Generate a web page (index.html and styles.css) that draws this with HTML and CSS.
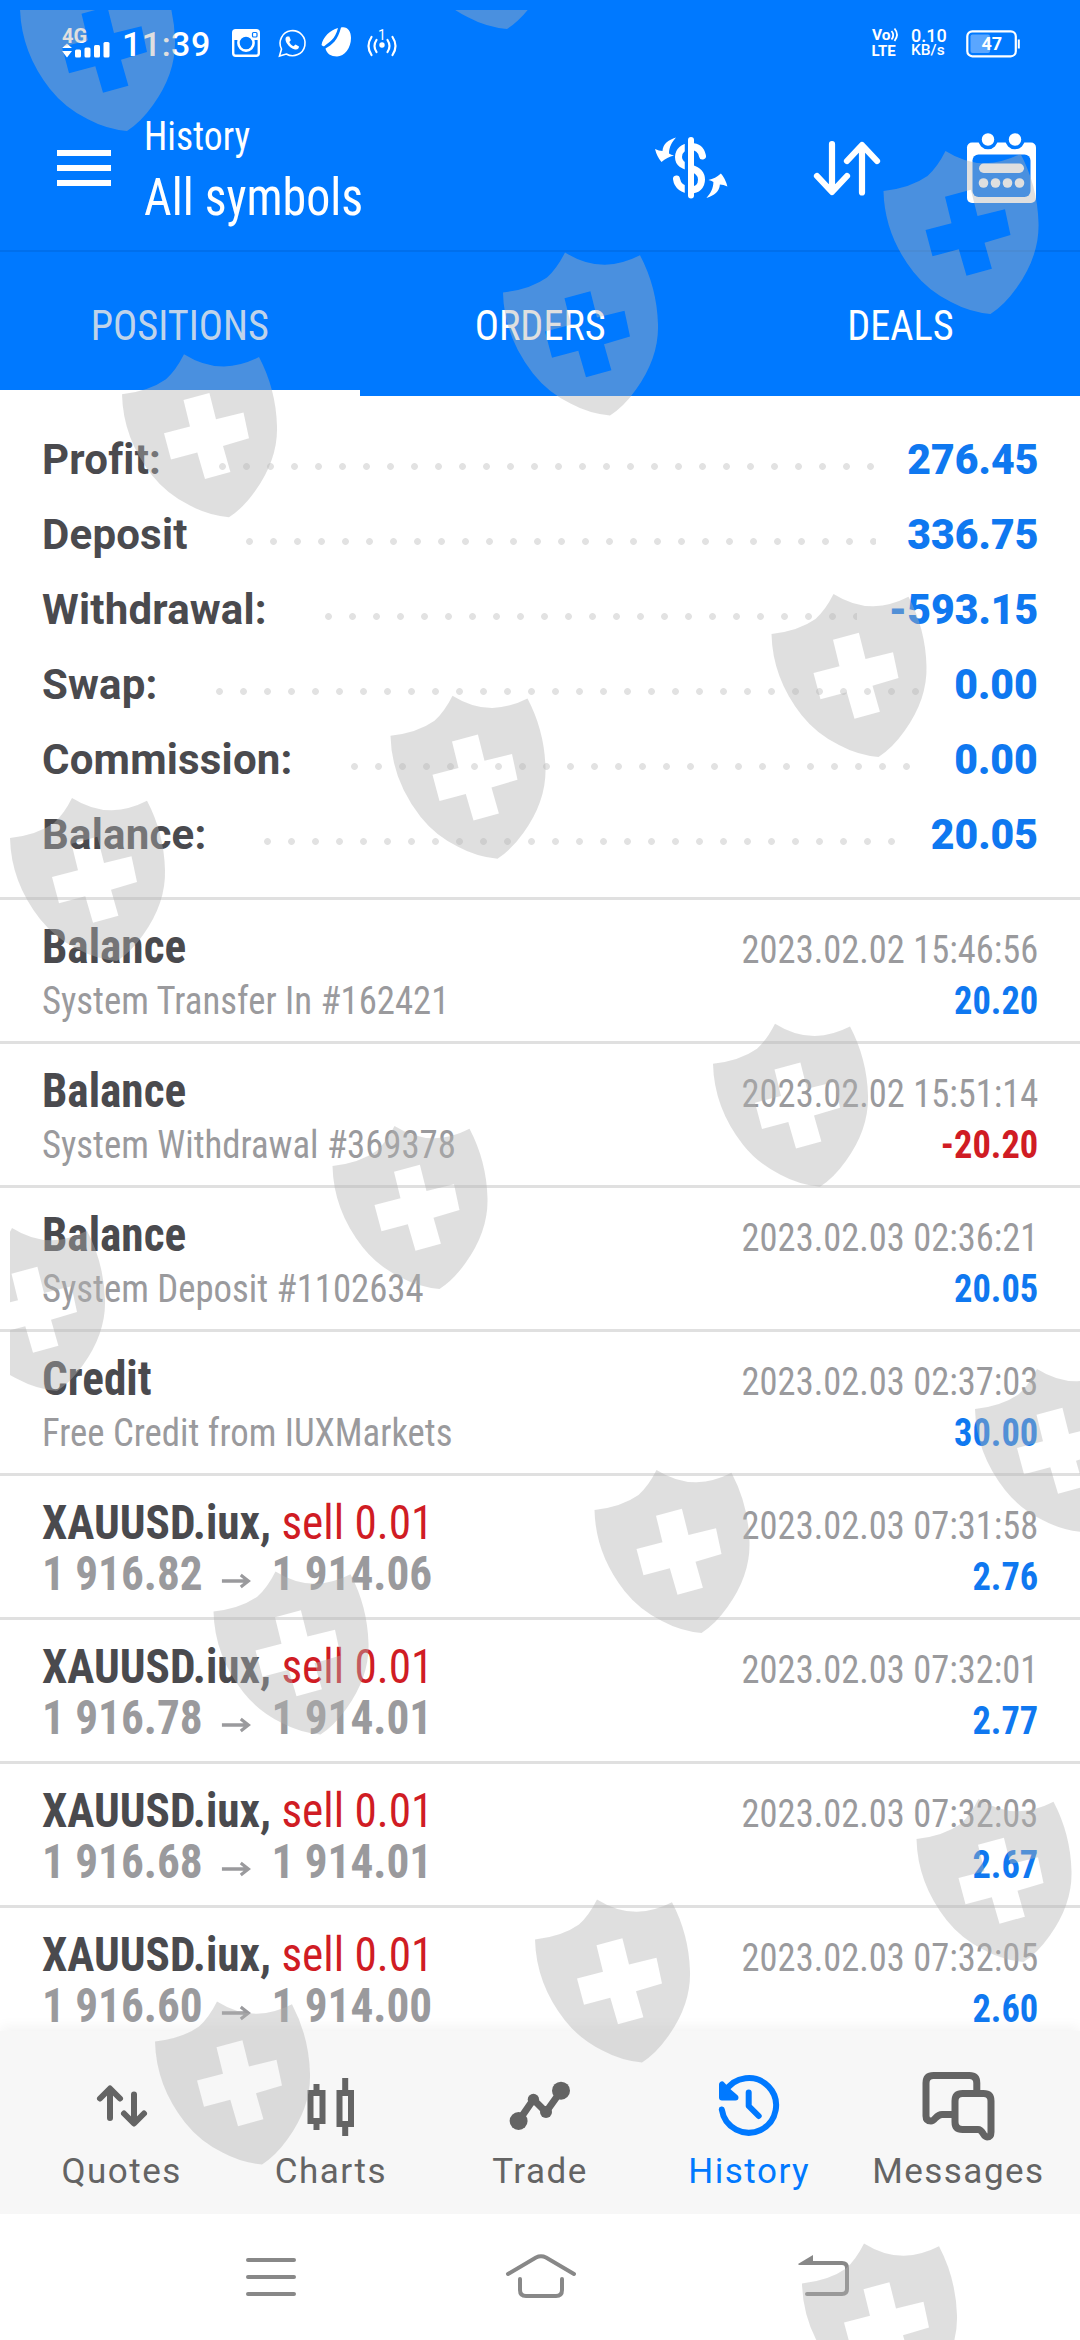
FILE: index.html
```
<!DOCTYPE html>
<html lang="en">
<head>
    <meta charset="UTF-8">
    <meta name="viewport" content="width=device-width, initial-scale=1.0">
    <title>History</title>
    <link rel="stylesheet" href="styles.css">
</head>
<body>
    <div class="screen">
        <header class="header">
            <div class="status-bar">
                <svg class="signal" width="48" height="30" viewBox="0 0 48 30" fill="#fff">
                    <text x="0" y="14.500" font-size="20" font-weight="700">4G</text>
                    <path d="M5 15.500l5 4.500H0zM0 23h10l-5 6.500z"/>
                    <rect x="13" y="21.500" width="6" height="8" rx="1.500"/>
                    <rect x="22.500" y="19.500" width="6" height="10" rx="1.500"/>
                    <rect x="32" y="17" width="6" height="12.500" rx="1.500"/>
                    <rect x="41.500" y="14" width="6" height="15.500" rx="1.500"/>
                </svg>
                <span class="clock">11:39</span>
                <svg class="insta" width="28" height="28" viewBox="0 0 28 28" fill="none" stroke="#fff">
                    <rect x="1.200" y="1.200" width="25.600" height="25.600" rx="2.500" stroke-width="2.400"/>
                    <path d="M1 2h26v9h-7a7.500 7.500 0 0 0-12 0H1z" fill="#fff" stroke="none"/>
                    <circle cx="14" cy="14" r="7.600" fill="#0079ff" stroke-width="2.600"/>
                    <rect x="20.500" y="3.500" width="4.500" height="4.500" rx="1" fill="#fff" stroke="#0079ff" stroke-width="1.200"/>
                </svg>
                <svg class="whatsapp" width="28" height="28" viewBox="0 0 28 28" fill="none" stroke="#fff">
                    <path d="M1.500 27l2-7A12.500 12.500 0 1 1 8.300 25z" stroke-width="1.600"/>
                    <path d="M9 7.500c-2 1-2 4 0 7s5 5.500 8 6 4-1.500 4-3l-3.500-2-2 1.800c-2-.8-3.500-2.500-4.200-4.300l1.500-1.800L11.300 7.500z" fill="#fff" stroke="none"/>
                </svg>
                <svg class="bean" width="31" height="30" viewBox="0 0 31 30" fill="#fff">
                    <path d="M17 1C9 3 2 10 0.500 18c1 1 2 1.500 2.700 1.300C8 15 14 13 17 1z"/>
                    <path d="M20 .5c6-1.500 10 3 10 10.500 0 10-6.500 18.500-14 18.500-6 0-10.500-3-11.500-8C11 18 17 13 20 .5z"/>
                </svg>
                <svg class="hotspot" width="30" height="28" viewBox="0 0 30 28" fill="none" stroke="#fff" stroke-width="2.200" stroke-linecap="round">
                    <path d="M4.500 8Q-1.500 17 4.500 26M9.500 11Q5.500 17 9.500 23M25.500 8Q31.500 17 25.500 26M20.500 11Q24.500 17 20.500 23"/>
                    <circle cx="15" cy="16" r="1.600" fill="#fff"/>
                    <text x="11" y="10.500" font-size="14" fill="#fff" stroke="none">1</text>
                </svg>
                <div class="status-right">
                    <svg width="27" height="28" viewBox="0 0 27 28" fill="#fff">
                        <text x="0" y="12" font-size="15.500" font-weight="700">Vo</text>
                        <path d="M19.500 3q3.500 4 0 8.500M22.500 .5q5 6 0 12.500" fill="none" stroke="#fff" stroke-width="1.800"/>
                        <text x="-.5" y="27.500" font-size="15" font-weight="700">LTE</text>
                    </svg>
                    <div class="speed">
                        <span class="speed-value">0.10</span>
                        <span class="speed-unit">KB/s</span>
                    </div>
                    <svg class="battery" width="54" height="28" viewBox="0 0 54 28">
                        <rect x="1.300" y="1.300" width="48.500" height="25" rx="5" fill="none" stroke="#fff" stroke-width="2.200"/>
                        <rect x="4.500" y="4.500" width="19.500" height="18.600" rx="2" fill="#5aa6ff"/>
                        <rect x="51.800" y="9.500" width="2" height="9" fill="#fff"/>
                        <text x="15.500" y="20.400" font-size="18" font-weight="700" fill="#fff">47</text>
                    </svg>
                </div>
            </div>

            <div class="app-bar">
                <svg width="54" height="36" viewBox="0 0 54 36" fill="#fff">
                    <path d="M0 0h54v6H0zM0 15h54v6H0zM0 30h54v6H0z"/>
                </svg>
                <div class="titles">
                    <div class="title-small">History</div>
                    <div class="title-big">All symbols</div>
                </div>
                <div class="actions">
                    <svg width="72" height="62" viewBox="0 0 72 62">
                        <path d="M47.500 19C46 12 42 9.500 36 9.500c-8 0-12.500 4.500-12.500 10.500C23.500 28 31 29 36 31c6 2 10.500 5 10.500 11.500S42 53 36 53c-8 0-13.500-4-14.500-11" fill="none" stroke="#fff" stroke-width="7" stroke-linecap="round"/>
                        <path d="M31.500 0v62" stroke="#0079ff" stroke-width="3.500"/>
                        <path d="M36 3v55.500" stroke="#fff" stroke-width="6" stroke-linecap="round"/>
                        <g fill="#fff">
                            <path id="swap" d="M21 .5C13 3 8 7 7.500 14Q4 14 0 12q2 8 6.500 13Q12 20 19 18.500q-3-.5-5-2C14 10 17 5 21 .5z"/>
                            <use href="#swap" transform="rotate(180 36.200 30.700)"/>
                        </g>
                    </svg>
                    <svg width="66" height="55" viewBox="0 0 66 55" fill="none" stroke="#fff" stroke-width="6.200" stroke-linecap="round" stroke-linejoin="round">
                        <path d="M18 3v47M3 35l15 16 15-16M48 51.500V5M33 20L48 4l15 16"/>
                    </svg>
                    <svg width="69" height="70" viewBox="0 0 69 70" fill="#fff">
                        <rect y="9.500" width="69" height="60.500" rx="5"/>
                        <rect x="5.500" y="21.500" width="58" height="42.500" rx="6" fill="#0079ff"/>
                        <g stroke="#0079ff" stroke-width="3.500">
                            <circle cx="21" cy="6.500" r="8"/>
                            <circle cx="48" cy="6.500" r="8"/>
                        </g>
                        <rect x="12" y="30.500" width="45" height="9.500" rx="4.700"/>
                        <circle cx="16.500" cy="50" r="4.800"/>
                        <circle cx="28.500" cy="50" r="4.800"/>
                        <circle cx="40.500" cy="50" r="4.800"/>
                        <circle cx="52.500" cy="50" r="4.800"/>
                    </svg>
                </div>
            </div>

            <nav class="tabs">
                <div class="tab active"><span>POSITIONS</span></div>
                <div class="tab"><span>ORDERS</span></div>
                <div class="tab"><span>DEALS</span></div>
            </nav>
        </header>

        <section class="summary">
            <div class="sum-row"><span>Profit:</span><i class="dots"></i><b>276.45</b></div>
            <div class="sum-row"><span>Deposit</span><i class="dots"></i><b>336.75</b></div>
            <div class="sum-row"><span>Withdrawal:</span><i class="dots"></i><b>-593.15</b></div>
            <div class="sum-row"><span>Swap:</span><i class="dots"></i><b>0.00</b></div>
            <div class="sum-row"><span>Commission:</span><i class="dots"></i><b>0.00</b></div>
            <div class="sum-row"><span>Balance:</span><i class="dots"></i><b>20.05</b></div>
        </section>

        <main class="list">
            <div class="item">
                <div class="left">
                    <div class="name">Balance</div>
                    <div class="note">System Transfer In #162421</div>
                </div>
                <div class="right">
                    <div class="date">2023.02.02 15:46:56</div>
                    <div class="amount">20.20</div>
                </div>
            </div>
            <div class="item">
                <div class="left">
                    <div class="name">Balance</div>
                    <div class="note">System Withdrawal #369378</div>
                </div>
                <div class="right">
                    <div class="date">2023.02.02 15:51:14</div>
                    <div class="amount loss">-20.20</div>
                </div>
            </div>
            <div class="item">
                <div class="left">
                    <div class="name">Balance</div>
                    <div class="note">System Deposit #1102634</div>
                </div>
                <div class="right">
                    <div class="date">2023.02.03 02:36:21</div>
                    <div class="amount">20.05</div>
                </div>
            </div>
            <div class="item">
                <div class="left">
                    <div class="name">Credit</div>
                    <div class="note">Free Credit from IUXMarkets</div>
                </div>
                <div class="right">
                    <div class="date">2023.02.03 02:37:03</div>
                    <div class="amount">30.00</div>
                </div>
            </div>
            <div class="item">
                <div class="left">
                    <div class="name">XAUUSD.iux, <span class="sell">sell 0.01</span></div>
                    <div class="price">1 916.82 <svg class="arrow" viewBox="0 0 31 16"><path d="M1 8h28M21 2l8 6-8 6"/></svg> 1 914.06</div>
                </div>
                <div class="right">
                    <div class="date">2023.02.03 07:31:58</div>
                    <div class="amount">2.76</div>
                </div>
            </div>
            <div class="item">
                <div class="left">
                    <div class="name">XAUUSD.iux, <span class="sell">sell 0.01</span></div>
                    <div class="price">1 916.78 <svg class="arrow" viewBox="0 0 31 16"><path d="M1 8h28M21 2l8 6-8 6"/></svg> 1 914.01</div>
                </div>
                <div class="right">
                    <div class="date">2023.02.03 07:32:01</div>
                    <div class="amount">2.77</div>
                </div>
            </div>
            <div class="item">
                <div class="left">
                    <div class="name">XAUUSD.iux, <span class="sell">sell 0.01</span></div>
                    <div class="price">1 916.68 <svg class="arrow" viewBox="0 0 31 16"><path d="M1 8h28M21 2l8 6-8 6"/></svg> 1 914.01</div>
                </div>
                <div class="right">
                    <div class="date">2023.02.03 07:32:03</div>
                    <div class="amount">2.67</div>
                </div>
            </div>
            <div class="item">
                <div class="left">
                    <div class="name">XAUUSD.iux, <span class="sell">sell 0.01</span></div>
                    <div class="price">1 916.60 <svg class="arrow" viewBox="0 0 31 16"><path d="M1 8h28M21 2l8 6-8 6"/></svg> 1 914.00</div>
                </div>
                <div class="right">
                    <div class="date">2023.02.03 07:32:05</div>
                    <div class="amount">2.60</div>
                </div>
            </div>
        </main>

        <nav class="bottom-nav">
            <div class="nav-item">
                <svg class="nav-icon" viewBox="0 0 72 72" stroke-width="6">
                    <path d="M24 48V19M14 28.500L24 18.500l10 10M48 24.500V53M38 43.500l10 10 10-10"/>
                </svg>
                <span>Quotes</span>
            </div>
            <div class="nav-item">
                <svg class="nav-icon candles" viewBox="0 0 72 72" stroke-width="6">
                    <path d="M15.500 23h12v28h-12zM21.500 14v9M21.500 51v9M44.500 23h11.500v31H44.500zM50.200 8v15M50.200 54v12"/>
                </svg>
                <span>Charts</span>
            </div>
            <div class="nav-item">
                <svg class="nav-icon" viewBox="0 0 72 72" stroke-width="7">
                    <path d="M14.600 51l14.800-21.500L42 42l15-21"/>
                    <g fill="#646464" stroke="none">
                        <circle cx="14.600" cy="51" r="9"/>
                        <circle cx="29.400" cy="29.500" r="5.700"/>
                        <circle cx="42" cy="42" r="6"/>
                        <circle cx="57" cy="20.700" r="9"/>
                    </g>
                </svg>
                <span>Trade</span>
            </div>
            <div class="nav-item active">
                <svg class="nav-icon" viewBox="0 0 72 72" stroke-width="6">
                    <path d="M8.800 39.500A27.300 27.300 0 1 0 12 22M35.700 22.500V36l10 10"/>
                    <path d="M9 14.500v13h13.500L15 21z" fill="#0079ff"/>
                </svg>
                <span>History</span>
            </div>
            <div class="nav-item">
                <svg class="nav-icon" viewBox="0 0 72 72" stroke-width="7">
                    <path d="M54.800 22V13q0-7.500-7.500-7.500H11.500Q4 5.500 4 13v33q0 5 5 5c4 0 5-6.500 11-6.500h11"/>
                    <path d="M40.500 23.500h21q7.500 0 7.500 7.500v31q0 5-4 5c-4 0-4-7.500-9-7.500H40.500Q33 59.500 33 52V31q0-7.500 7.500-7.500z"/>
                </svg>
                <span>Messages</span>
            </div>
        </nav>

        <div class="system-bar">
            <svg width="50" height="48" viewBox="0 0 50 48"><path d="M2 7h46M2 24h46M2 41h46"/></svg>
            <svg class="home" width="72" height="48" viewBox="0 0 72 48"><path d="M3 21L31 4.500q5-2.500 10 0L69 21M15 26v11q0 6 6 6h30q6 0 6-6V26"/></svg>
            <svg width="54" height="48" viewBox="0 0 54 48"><path d="M8 10h37q5 0 5 5v21q0 5-5 5H10"/><path d="M1 11l15-9v10H2z" fill="#888" stroke="none"/></svg>
        </div>

        <svg class="shields" viewBox="0 0 1080 2340">
            <defs>
                <path id="shield" fill-rule="evenodd" d="M62 0Q82 12.500 102 12.300Q120 11.500 137 2.700Q154 35 155 72Q156 105 133 137Q121 154 107 163Q86 161 67.500 151Q45 140 30 121Q1 84 0 40Q27 37 44 25Q54 16 62 0zM87.400 38.700L61.500 45.700 68 72.200 42 79 49 105.300 75.300 98.300 83 124.700 108.400 117.700 101 91.700 127 84 121.500 58.300 94 65z"/>
                <clipPath id="page"><rect x="10" y="10" width="1070" height="2330"/></clipPath>
            </defs>
            <g clip-path="url(#page)">
                <use href="#shield" x="20" y="-32"/>
                <use href="#shield" x="400" y="-134"/>
                <use href="#shield" x="883.500" y="151"/>
                <use href="#shield" x="503" y="252.500"/>
                <use href="#shield" x="122" y="354.300"/>
                <use href="#shield" x="771.500" y="594"/>
                <use href="#shield" x="390.500" y="695.700"/>
                <use href="#shield" x="10" y="798"/>
                <use href="#shield" x="713" y="1023.700"/>
                <use href="#shield" x="332.500" y="1126"/>
                <use href="#shield" x="-50" y="1228"/>
                <use href="#shield" x="975" y="1369"/>
                <use href="#shield" x="594.500" y="1470"/>
                <use href="#shield" x="213.500" y="1571.500"/>
                <use href="#shield" x="916.500" y="1799"/>
                <use href="#shield" x="535" y="1899.500"/>
                <use href="#shield" x="155" y="2001.500"/>
                <use href="#shield" x="802" y="2243.500"/>
            </g>
        </svg>
    </div>
</body>
</html>
```
FILE: styles.css
```
* {
    box-sizing: border-box;
}

body {
    margin: 0;
    background: #fff;
    font-family: Roboto, sans-serif;
}

svg {
    display: block;
    flex: none;
    overflow: visible;
}

.screen {
    position: relative;
    width: 1080px;
    height: 2340px;
    display: flex;
    flex-direction: column;
    overflow: hidden;
}

.header {
    background: #0079ff;
    color: #fff;
}

/* status bar */
.status-bar {
    height: 88px;
    padding: 0 60px 0 62px;
    display: flex;
    align-items: center;
}

.signal {
    margin-top: -3px;
}

.clock {
    width: 87px;
    margin: 0 23px 0 12px;
    font-size: 34px;
    font-weight: 500;
    letter-spacing: 0.5px;
}

.insta,
.whatsapp {
    margin-top: -3px;
}

.whatsapp {
    margin-left: 18px;
}

.bean {
    margin: -4px 0 0 15px;
}

.hotspot {
    margin: -3px 0 0 15px;
}

.status-right {
    margin-left: auto;
    display: flex;
    align-items: center;
}

.status-right svg {
    margin-top: -4px;
}

.speed {
    display: flex;
    flex-direction: column;
    width: 43px;
    margin: -3px 12px 0 12px;
    font-weight: 500;
    line-height: 15px;
}

.speed-value {
    font-size: 18px;
}

.speed-unit {
    font-size: 15.5px;
}

.status-right .battery {
    margin-top: -1px;
}

/* app bar */
.app-bar {
    height: 162px;
    padding: 0 44px 2px 57px;
    display: flex;
    align-items: center;
}

.titles {
    margin-left: 33px;
    font-family: "Roboto Condensed", Roboto, sans-serif;
    transform: scaleX(0.94);
    transform-origin: left;
}

.title-small {
    font-size: 40px;
    line-height: 56px;
    margin-bottom: 4px;
}

.title-big {
    font-size: 51px;
    line-height: 58px;
}

.actions {
    margin-left: auto;
    display: flex;
    align-items: center;
    gap: 87px;
}

.tabs {
    display: flex;
    height: 146px;
    border-top: 2px solid #006fec;
    font-family: "Roboto Condensed", Roboto, sans-serif;
    font-size: 42px;
}

.tab {
    flex: 1;
    display: flex;
    align-items: center;
    justify-content: center;
    padding-top: 3px;
}

.tab span {
    transform: scaleX(0.96);
}

.tab.active {
    color: #bfd3ea;
    box-shadow: inset 0 -6px #fff;
}

/* totals */
.summary {
    height: 504px;
    padding: 26px 42px 0;
    border-bottom: 3px solid #e0e0e0;
    font-size: 42px;
    font-weight: 700;
    line-height: 75px;
    color: #4a4a4e;
}

.sum-row {
    display: flex;
}

.sum-row span {
    letter-spacing: 0.2px;
}

.sum-row b {
    color: #0f78f0;
    transform: scaleX(0.975);
    transform-origin: right;
}

.dots {
    flex: 1;
    height: 7px;
    margin: 41px 28px 0 58px;
    background: radial-gradient(circle at 3.5px 3.5px, #e2e2e2 3px, transparent 3.8px) 0 0 / 24px 7px repeat-x;
}

/* history list */
.list {
    flex: 1;
    min-height: 0;
    overflow: hidden;
    font-family: "Roboto Condensed", Roboto, sans-serif;
}

.item {
    display: flex;
    justify-content: space-between;
    height: 144px;
    padding: 20px 42px 0;
    border-bottom: 3px solid #e0e0e0;
}

.left {
    transform: scaleX(0.942);
    transform-origin: left;
}

.right {
    padding-top: 3px;
    text-align: right;
    font-size: 39px;
    transform: scaleX(0.935);
    transform-origin: right;
}

.name {
    font-size: 48px;
    line-height: 54px;
    font-weight: 700;
    color: #4a4a4e;
}

.sell {
    font-weight: 400;
    color: #d01c24;
}

.note {
    margin-top: 3px;
    font-size: 39px;
    line-height: 48px;
    color: #9a9a9d;
}

.price {
    display: flex;
    align-items: center;
    gap: 23px;
    font-size: 48px;
    line-height: 48px;
    font-weight: 700;
    color: #9a9a9d;
}

.arrow {
    width: 31px;
    height: 16px;
    margin: 13px 0 0 -4px;
    fill: none;
    stroke: #9a9a9d;
    stroke-width: 3.4;
}

.date {
    line-height: 54px;
    color: #9a9a9d;
}

.amount {
    line-height: 48px;
    font-weight: 700;
    color: #0f78f0;
}

.amount.loss {
    color: #d01c24;
}

/* bottom navigation */
.bottom-nav {
    display: flex;
    height: 183px;
    padding: 39px 17px 0;
    background: #f7f7f7;
    box-shadow: 0 -4px 12px rgba(0, 0, 0, 0.05);
}

.nav-item {
    flex: 1;
    display: flex;
    flex-direction: column;
    align-items: center;
    gap: 8px;
    font-size: 35px;
    line-height: 44px;
    letter-spacing: 1.5px;
    color: #646464;
}

.nav-icon {
    width: 72px;
    height: 72px;
    fill: none;
    stroke: #646464;
    stroke-linecap: round;
    stroke-linejoin: round;
}

.candles {
    stroke-linecap: butt;
    stroke-linejoin: miter;
}

.nav-item.active {
    color: #0079ff;
}

.nav-item.active .nav-icon {
    stroke: #0079ff;
}

.system-bar {
    display: flex;
    align-items: center;
    height: 126px;
    padding-left: 246px;
    background: #fff;
}

.system-bar svg {
    fill: none;
    stroke: #888;
    stroke-width: 4;
    stroke-linecap: round;
}

.home {
    margin: 0 220px 0 209px;
}

/* watermark over the whole screen */
.shields {
    position: absolute;
    top: 0;
    left: 0;
    width: 1080px;
    height: 2340px;
    fill: rgba(178, 178, 178, 0.416);
}
```
